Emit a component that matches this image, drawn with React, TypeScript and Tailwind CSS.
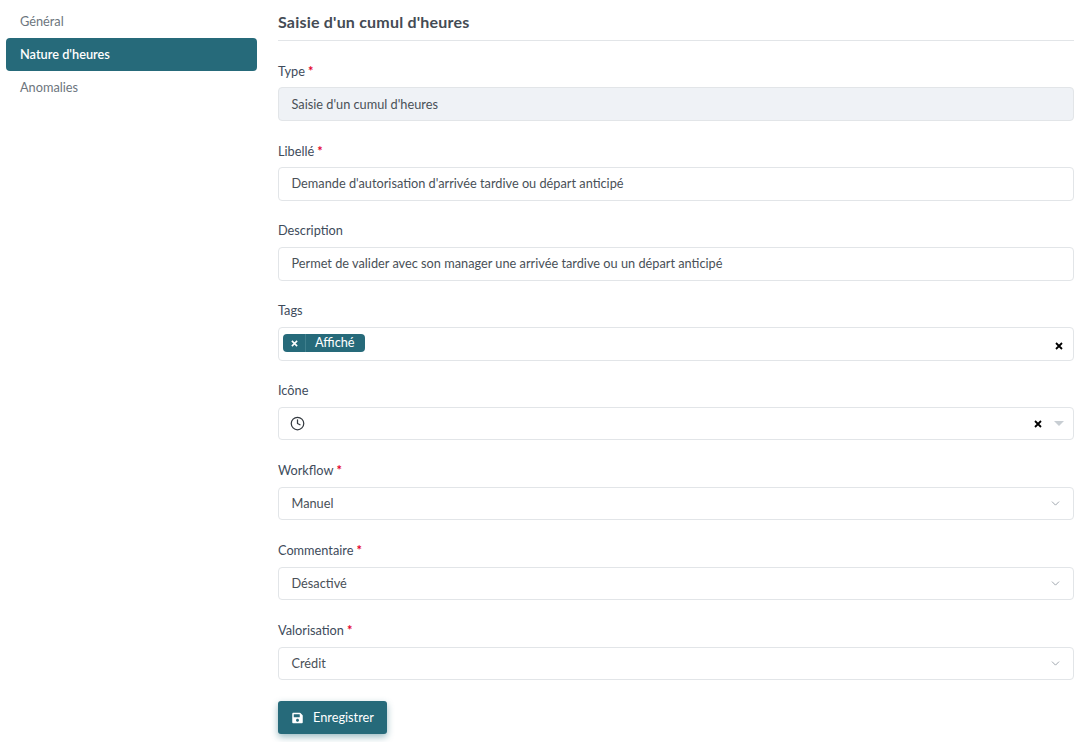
import { ChevronDown, Clock } from "lucide-react";

const fieldBox =
  "flex items-center h-[33.4px] px-[12.5px] border border-[#e2e5e8] rounded-[4px] text-[12.75px] text-[#495057]";

const Label = ({ text, required }: { text: string; required?: boolean }) => (
  <label className="block h-[17px] mb-[7.8px] leading-[17px] text-[12.75px] text-[#3e4b5b]">
    {text}
    {required && <span className="text-[#e3002b] font-bold"> *</span>}
  </label>
);

const ClearX = ({ className }: { className: string }) => (
  <svg viewBox="0 0 8 8" className={className} fill="none" stroke="#000" strokeWidth="1.8">
    <path d="M1 1l6 6M7 1l-6 6" />
  </svg>
);

const SelectField = ({ label, value }: { label: string; value: string }) => (
  <div className="mb-[21.7px]">
    <Label text={label} required />
    <div className={`${fieldBox} justify-between bg-white`}>
      <span>{value}</span>
      <ChevronDown className="w-[13px] h-[13px] text-[#8a939c] -mr-[1.5px]" strokeWidth={1.5} />
    </div>
  </div>
);

const SaveIcon = () => (
  <svg viewBox="0 0 448 512" className="w-[11px] h-[12px]" fill="#fff">
    <path d="M433.9 129.9l-83.9-83.9A48 48 0 0 0 316.1 32H48C21.5 32 0 53.5 0 80v352c0 26.5 21.5 48 48 48h352c26.5 0 48-21.5 48-48V163.9a48 48 0 0 0-14.1-34zM224 416c-35.3 0-64-28.7-64-64 0-35.3 28.7-64 64-64s64 28.7 64 64c0 35.3-28.7 64-64 64zm96-304.5V212c0 6.6-5.4 12-12 12H76c-6.6 0-12-5.4-12-12V108c0-6.6 5.4-12 12-12h228.5c3.2 0 6.2 1.3 8.5 3.5l3.5 3.5c2.2 2.2 3.5 5.3 3.5 8.5z" />
  </svg>
);

export default function App() {
  return (
    <div className="flex min-h-[742px] bg-white font-['Lato','Noto_Sans',sans-serif] text-[12.75px]">
      {/* sidebar */}
      <nav className="w-[251px] ml-[6px] mt-[5px] shrink-0">
        <div className="h-[33px] px-[14px] flex items-center text-[#6c757d]">Général</div>
        <div className="h-[33px] px-[14px] flex items-center rounded-[4px] bg-[#266a7a] text-white font-semibold">
          Nature d'heures
        </div>
        <div className="h-[33px] px-[14px] flex items-center text-[#6c757d]">Anomalies</div>
      </nav>

      {/* form */}
      <main className="w-[796px] ml-[21px]">
        <h2 className="h-[41px] pt-[12px] leading-[19px] border-b border-[#e2e5e8] text-[16px] tracking-[0.2px] font-bold text-[#444b54]">
          Saisie d'un cumul d'heures
        </h2>

        <div className="mt-[21.7px] mb-[21.7px]">
          <Label text="Type" required />
          <div className={`${fieldBox} bg-[#eff2f6]`}>Saisie d'un cumul d'heures</div>
        </div>

        <div className="mb-[21.7px]">
          <Label text="Libellé" required />
          <div className={`${fieldBox} bg-white`}>Demande d'autorisation d'arrivée tardive ou départ anticipé</div>
        </div>

        <div className="mb-[21.7px]">
          <Label text="Description" />
          <div className={`${fieldBox} bg-white`}>
            Permet de valider avec son manager une arrivée tardive ou un départ anticipé
          </div>
        </div>

        <div className="mb-[21.7px]">
          <Label text="Tags" />
          <div className={`${fieldBox} bg-white justify-between !pl-[4px] !pr-[10px]`}>
            <span className="flex items-center h-[18px] -mt-[1px] rounded-[4px] bg-[#266a7a] text-white">
              <span className="flex items-center justify-center w-[23px] h-full border-r border-[#3f7f8d]">
                <svg viewBox="0 0 8 8" className="w-[7px] h-[7px]" fill="none" stroke="#fff" strokeWidth="1.8">
                  <path d="M1 1l6 6M7 1l-6 6" />
                </svg>
              </span>
              <span className="pl-[9px] pr-[10px] pb-[1px]">Affiché</span>
            </span>
            <ClearX className="w-[8px] h-[8px] mt-[4px]" />
          </div>
        </div>

        <div className="mb-[21.7px]">
          <Label text="Icône" />
          <div className={`${fieldBox} bg-white justify-between !pl-[11px] !pr-[9px]`}>
            <Clock className="w-[15px] h-[15px] text-[#343a40]" strokeWidth={2} />
            <span className="flex items-center gap-[12px]">
              <ClearX className="w-[8px] h-[8px]" />
              <span className="w-0 h-0 border-x-[5px] border-x-transparent border-t-[5px] border-t-[#c8ced3]" />
            </span>
          </div>
        </div>

        <SelectField label="Workflow" value="Manuel" />
        <SelectField label="Commentaire" value="Désactivé" />
        <SelectField label="Valorisation" value="Crédit" />

        <button className="-mt-[0.5px] flex items-center gap-[10px] h-[33px] w-[109px] pl-[14px] rounded-[3px] bg-[#266a7a] text-white text-[12.75px] shadow-[0_3px_7px_rgba(38,106,122,0.45)]">
          <SaveIcon />
          Enregistrer
        </button>
      </main>
    </div>
  );
}
